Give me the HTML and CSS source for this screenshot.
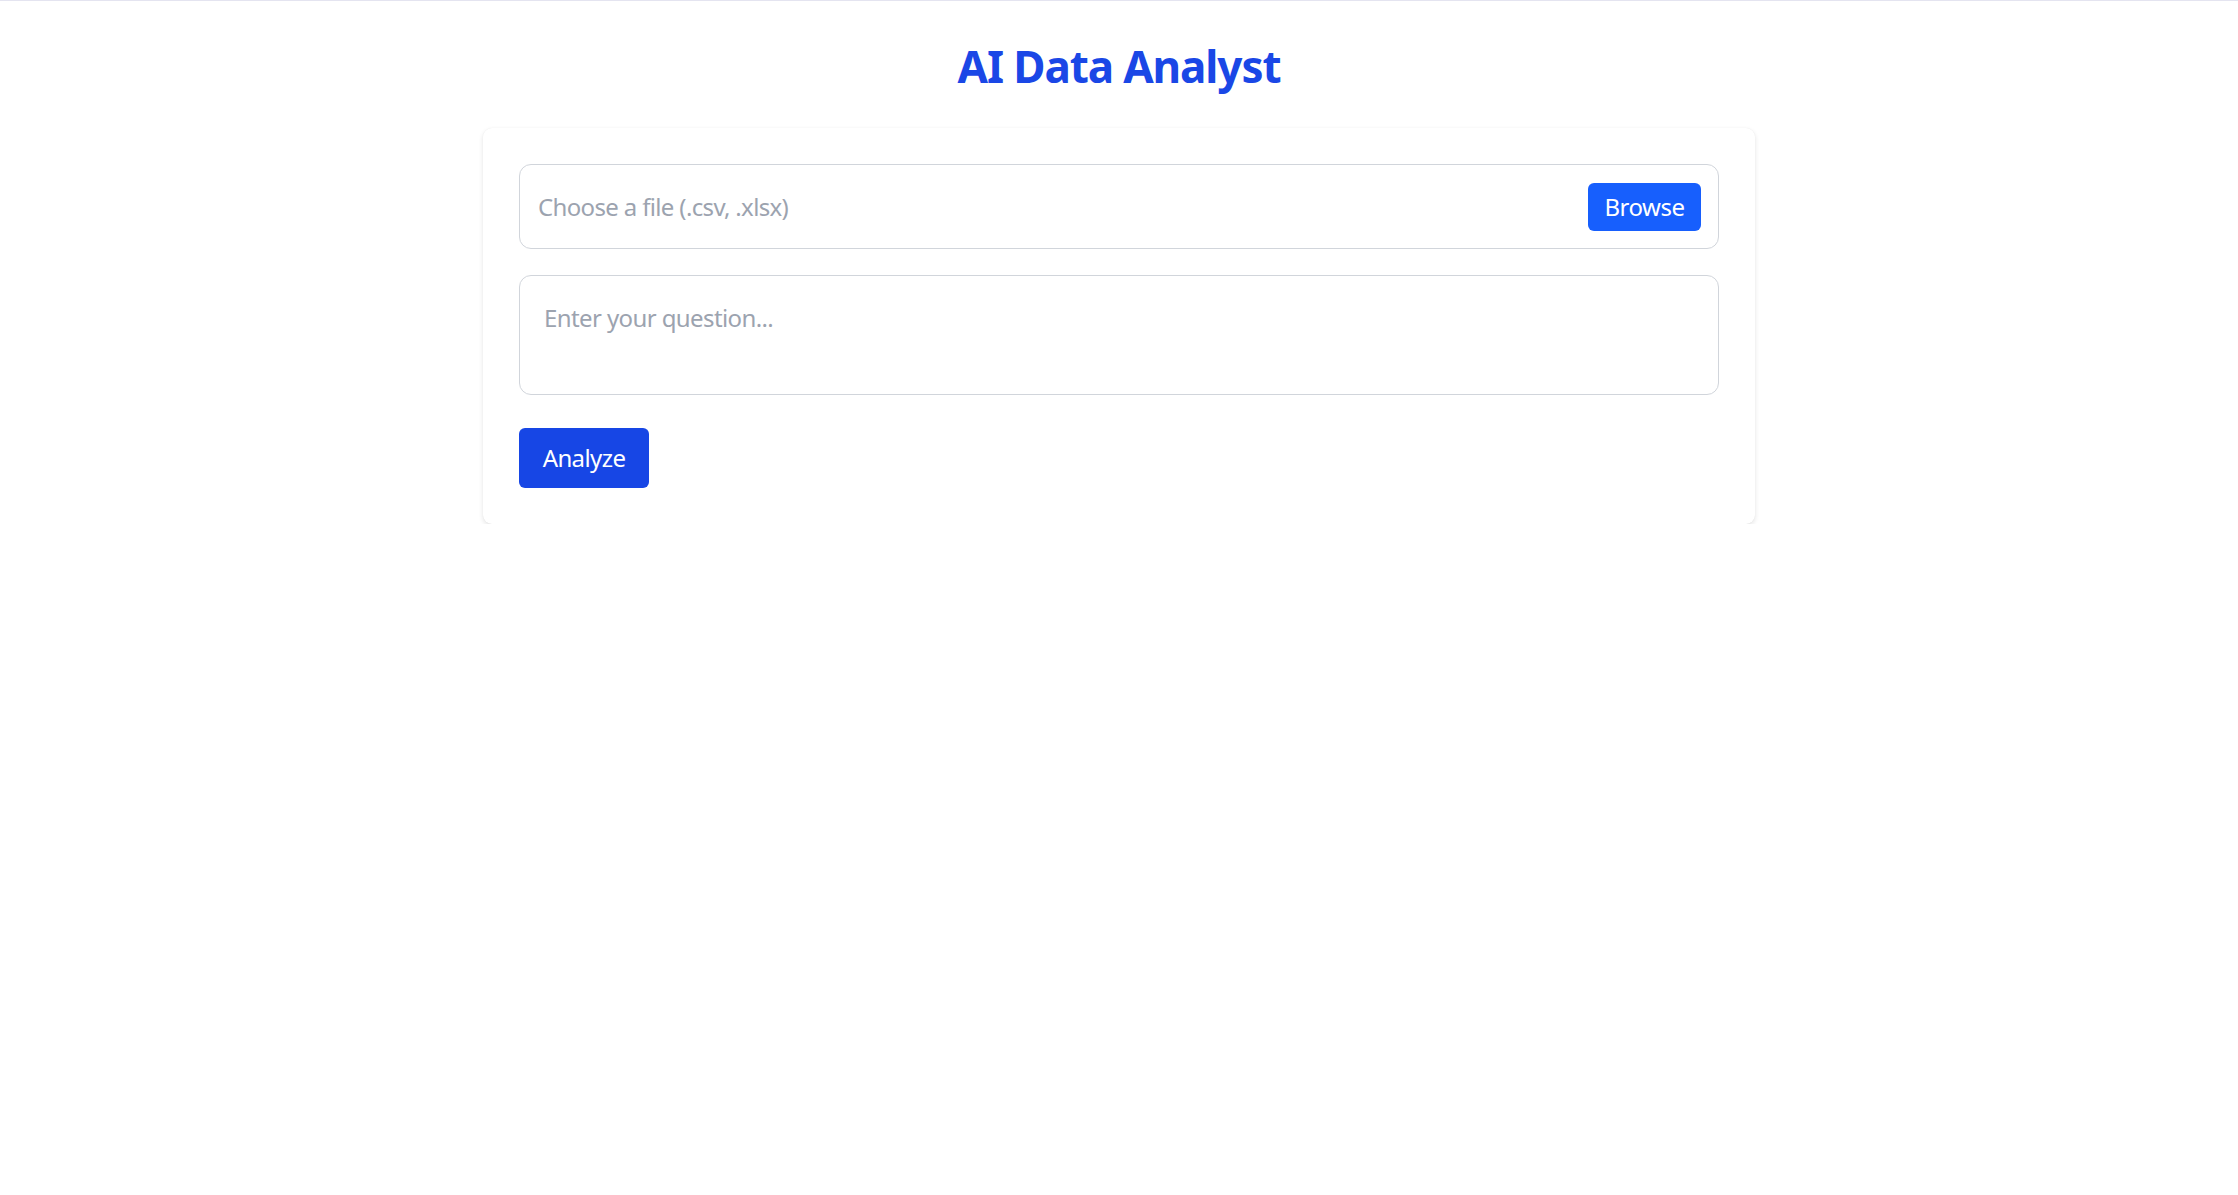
FILE: index.html
```html
<!DOCTYPE html>
<html lang="en">
<head>
<meta charset="utf-8">
<title>AI Data Analyst</title>
<link rel="stylesheet" href="styles.css">
</head>
<body>
<main class="page">
  <h1 class="title">AI Data Analyst</h1>
  <section class="card">
    <label class="file-input">
      <span class="file-placeholder">Choose a file (.csv, .xlsx)</span>
      <span class="browse-btn">Browse</span>
    </label>
    <textarea class="question" placeholder="Enter your question..."></textarea>
    <button class="analyze-btn" type="button">Analyze</button>
  </section>
</main>
</body>
</html>
```

FILE: styles.css
```css
html, body {
  margin: 0;
  padding: 0;
  background: #ffffff;
}

body {
  border-top: 1px solid #e4e4f0;
  font-family: "Noto Sans", "Open Sans", "Liberation Sans", sans-serif;
  color: #111827;
}

.page {
  padding-top: 38px;
}

.title {
  margin: 0 0 35px 0;
  text-align: center;
  font-size: 44px;
  line-height: 54px;
  font-weight: 700;
  letter-spacing: -1.1px;
  color: #1a47e6;
}

.card {
  box-sizing: border-box;
  width: 1272px;
  margin: 0 auto;
  padding: 36px;
  background: #ffffff;
  border-radius: 9px;
  box-shadow: 0 2px 5px rgba(0, 0, 0, 0.11), 0 0 1px rgba(0, 0, 0, 0.07);
  display: flex;
  flex-direction: column;
  align-items: flex-start;
}

.file-input {
  box-sizing: border-box;
  width: 100%;
  height: 85px;
  border: 1.5px solid #d1d5db;
  border-radius: 12px;
  padding: 0 17px 0 18px;
  display: flex;
  align-items: center;
  justify-content: space-between;
}

.file-placeholder {
  font-size: 24px;
  line-height: 36px;
  letter-spacing: -0.65px;
  color: #9ca3af;
}

.browse-btn {
  box-sizing: border-box;
  width: 113px;
  height: 48px;
  border-radius: 6px;
  background: #175ffd;
  color: #ffffff;
  font-size: 24px;
  line-height: 48px;
  letter-spacing: -0.5px;
  text-align: center;
}

.question {
  box-sizing: border-box;
  display: block;
  width: 100%;
  height: 120px;
  margin: 26px 0 0 0;
  padding: 24px;
  border: 1.5px solid #d1d5db;
  border-radius: 12px;
  font-family: inherit;
  font-size: 24px;
  line-height: 36px;
  letter-spacing: -0.6px;
  color: #111827;
  resize: none;
  outline: none;
}

.question::placeholder {
  color: #9ca3af;
}

.analyze-btn {
  box-sizing: border-box;
  margin-top: 33px;
  width: 130px;
  height: 60px;
  padding: 0;
  border: none;
  border-radius: 6px;
  background: #1746e5;
  color: #ffffff;
  font-family: inherit;
  font-size: 24px;
  line-height: 36px;
  letter-spacing: -0.6px;
  text-align: center;
  cursor: pointer;
}
```
